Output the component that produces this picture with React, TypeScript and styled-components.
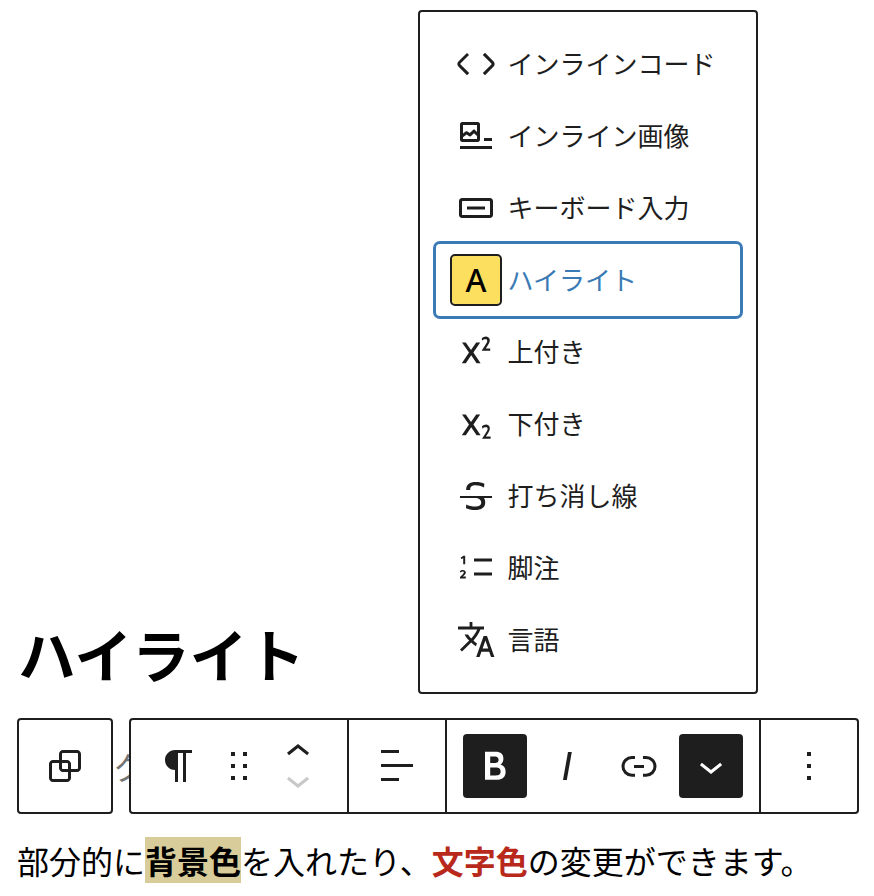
import React from "react";
import styled, { createGlobalStyle } from "styled-components";

const Global = createGlobalStyle`
  html, body { margin: 0; padding: 0; background: #fff; }
  body { font-family: "Noto Sans CJK JP", "Noto Sans", sans-serif; color: #000; }
`;

const Page = styled.div`
  position: relative;
  width: 874px;
  height: 896px;
  overflow: hidden;
  padding-top: 613px;
  box-sizing: border-box;
`;

const Menu = styled.div`
  position: absolute;
  left: 418px;
  top: 10px;
  width: 340px;
  box-sizing: border-box;
  padding: 16px;
  background: #fff;
  border: 2px solid #1e1e1e;
  border-radius: 4px;
  display: flex;
  flex-direction: column;
  z-index: 2;
`;

const Item = styled.div<{ $active?: boolean }>`
  height: 72px;
  display: flex;
  align-items: center;
  gap: 8px;
  padding-left: 16px;
  font-size: 26px;
  color: ${(p) => (p.$active ? "#3a7ab5" : "#1e1e1e")};
  border-radius: 4px;
  box-shadow: ${(p) => (p.$active ? "0 0 0 3px #3a7ab5" : "none")};
`;

const ItemLabel = styled.span`
  margin: 0 0 4px -0.5px;
`;

const Icon = styled.svg`
  width: 48px;
  height: 48px;
  flex: none;
  fill: currentColor;
  display: block;
`;

const MenuIcon = styled(Icon)`
  color: #1e1e1e;
`;

const Swatch = styled.span`
  width: 48px;
  height: 48px;
  flex: none;
  box-sizing: border-box;
  display: flex;
  align-items: center;
  justify-content: center;
  background: #fcdf5f;
  outline: 2px solid #1e1e1e;
  border-radius: 3px;
  color: #000;
  font-family: "Noto Sans", sans-serif;
  font-size: 32px;
  font-weight: 500;
  line-height: 1;
`;

const Heading = styled.h1`
  margin: 0 0 25px 18px;
  height: 80px;
  font-size: 57.6px;
  line-height: 80px;
  font-weight: 700;
`;

const ToolRow = styled.div`
  display: flex;
  margin-left: 17px;
  height: 96px;
`;

const Box = styled.div`
  display: flex;
  box-sizing: border-box;
  height: 96px;
  border: 2px solid #1e1e1e;
  border-radius: 4px;
  background: #fff;
  color: #1e1e1e;
`;

const Switcher = styled(Box)`
  width: 96px;
  align-items: center;
  justify-content: center;
`;

const Peek = styled.div`
  width: 16px;
  font-size: 32px;
  line-height: 96px;
  color: #757575;
  white-space: nowrap;
`;

const Toolbar = styled(Box)`
  position: relative;
  z-index: 1;
  width: 730px;
`;

const Group = styled.div<{ $w: number; $pad?: number; $gap?: number; $last?: boolean }>`
  width: ${(p) => p.$w}px;
  box-sizing: border-box;
  display: flex;
  align-items: center;
  justify-content: flex-start;
  gap: ${(p) => p.$gap ?? 0}px;
  padding-left: ${(p) => p.$pad ?? 0}px;
  border-right: ${(p) => (p.$last ? "none" : "2px solid #1e1e1e")};
`;

const Tool = styled.div<{ $w?: number; $on?: boolean }>`
  width: ${(p) => p.$w ?? 64}px;
  height: 64px;
  flex: none;
  display: flex;
  align-items: center;
  justify-content: center;
  border-radius: 4px;
  background: ${(p) => (p.$on ? "#1e1e1e" : "transparent")};
  color: ${(p) => (p.$on ? "#fff" : "#1e1e1e")};
`;

const Mover = styled.div`
  width: 48px;
  display: flex;
  flex-direction: column;
  align-items: center;
  gap: 12px;
`;

const MoverIcon = styled.svg<{ $dim?: boolean }>`
  width: 48px;
  height: 24px;
  display: block;
  fill: ${(p) => (p.$dim ? "#c8c8c8" : "#1e1e1e")};
`;

const Paragraph = styled.p`
  margin: 23px 0 0 17px;
  font-size: 32px;
  line-height: 46px;
  white-space: nowrap;
`;

const Marked = styled.strong`
  background: #d8cd9a;
  font-weight: 700;
`;

const Red = styled.strong`
  color: #b8291c;
  font-weight: 700;
`;

const P = ({ d }: { d: string }) => (
  <Icon viewBox="0 0 24 24">
    <path d={d} />
  </Icon>
);

const M = ({ d }: { d: string }) => (
  <MenuIcon viewBox="0 0 24 24">
    <path d={d} />
  </MenuIcon>
);

const paths = {
  code: "M20.8 10.7l-4.3-4.3-1.1 1.1 4.3 4.3c.1.1.1.3 0 .4l-4.3 4.3 1.1 1.1 4.3-4.3c.7-.8.7-1.9 0-2.6zM4.2 11.8l4.3-4.3-1-1-4.3 4.3c-.7.7-.7 1.8 0 2.5l4.3 4.3 1.1-1.1-4.3-4.3c-.2-.1-.2-.3-.1-.4z",
  image: "M4 18.5h16V17H4v1.5zM16 13v1.5h4V13h-4zM5.1 15h7.8c.6 0 1.1-.5 1.1-1.1V6.1c0-.6-.5-1.1-1.1-1.1H5.1C4.5 5 4 5.5 4 6.1v7.8c0 .6.5 1.1 1.1 1.1zm.4-8.5h7V10l-1-1c-.3-.3-.8-.3-1 0l-1.6 1.5-1.2-.7c-.3-.2-.6-.2-.9 0l-1.3 1V6.5zm0 6.1l1.8-1.3 1.3.8c.3.2.7.2.9-.1l1.5-1.4 1.5 1.4v1.5h-7v-.9z",
  kbd: "M5 7h14c.83 0 1.5.67 1.5 1.5v7c0 .83-.67 1.5-1.5 1.5H5c-.83 0-1.5-.67-1.5-1.5v-7C3.5 7.67 4.17 7 5 7zm.3 1.5c-.2 0-.3.1-.3.3v6.4c0 .2.1.3.3.3h13.4c.2 0 .3-.1.3-.3V8.8c0-.2-.1-.3-.3-.3H5.3zM7.5 11.25h9v1.5h-9z",
  sup: "M16.9 10.3l.8-1.3c.4-.6.7-1.2.9-1.6.2-.4.3-.8.3-1.2 0-.3-.1-.7-.2-1-.2-.2-.4-.4-.7-.6-.3-.2-.6-.3-1-.3s-.8.1-1.1.2c-.3.1-.7.3-1 .6l.1 1.3c.3-.3.5-.5.8-.6s.6-.2.9-.2c.3 0 .5.1.7.2.2.2.2.4.2.7 0 .3-.1.5-.2.8-.1.3-.4.7-.8 1.3l-1.8 2.8h4.3v-1.2h-2.2zM14.1 7.2h-2L9.5 11 6.9 7.2H5l3.5 5.1-3.6 5.3h2l2.7-4 2.7 4h2l-3.6-5.3 3.4-5.1z",
  sub: "M16.9 18.3l.8-1.2c.4-.6.7-1.2.9-1.6.2-.4.3-.8.3-1.2 0-.3-.1-.7-.2-1-.1-.3-.4-.5-.6-.7-.3-.2-.6-.3-1-.3s-.8.1-1.1.2c-.3.1-.7.3-1 .6l.2 1.3c.3-.3.5-.5.8-.6s.6-.2.9-.2c.3 0 .5.1.7.2.2.2.2.4.2.7 0 .3-.1.5-.2.8-.1.3-.4.7-.8 1.3L15 19.4h4.3v-1.2h-2.4zM14.1 7.2h-2L9.5 11 6.9 7.2H5l3.5 5.1-3.6 5.3h2l2.7-4 2.7 4h2l-3.6-5.3 3.4-5.1z",
  strike: "M9.1 9v-.5c0-.6.2-1.1.7-1.4.5-.3 1.2-.5 2-.5.7 0 1.4.1 2.1.3.7.2 1.4.5 2.1.9l.2-1.9c-.6-.3-1.2-.5-1.9-.7-.8-.1-1.6-.2-2.4-.2-1.5 0-2.7.3-3.6 1-.8.7-1.2 1.5-1.2 2.6V9h2zM20 12H4v1h8.3c.3.1.6.2.8.3.5.2.9.5 1.1.8.3.3.4.7.4 1.2 0 .7-.2 1.1-.8 1.5-.5.3-1.2.5-2.1.5-.8 0-1.6-.1-2.4-.3-.8-.2-1.5-.5-2.2-.8L7 18.1c.5.2 1.2.4 2 .6.8.2 1.6.3 2.4.3 1.7 0 3-.3 3.9-1 .9-.7 1.3-1.6 1.3-2.8 0-.9-.2-1.7-.7-2.2H20v-1z",
  note: "M11 7.2h9v1.5h-9zM11 14.2h9v1.5h-9zM4.3 6.9l1.4-1h.9v4.2h-1V7l-.8.6zM4 17.3v-.8l1.3-1.3c.4-.4.6-.6.6-.9 0-.3-.2-.5-.6-.5-.3 0-.6.2-.9.5l-.5-.6c.4-.5.9-.7 1.5-.7.9 0 1.5.5 1.5 1.2 0 .5-.2.8-.8 1.4l-.7.7h1.5v1z",
  lang: "M17.5 10h-1.7l-3.7 10.5h1.7l.9-2.6h3.9l.9 2.6h1.7L17.5 10zm-2.2 6.3 1.4-4 1.4 4h-2.8zm-4.8-3.8c1.6-1.8 2.9-3.6 3.7-5.7H16V5.2h-5.8V3H8.8v2.2H3v1.5h9.6c-.7 1.6-1.8 3.2-3 4.5-.6-.6-1.2-1.3-1.6-2H6.3c.6 1.1 1.3 2.2 2.3 3.1L4 16.7l1 1 4.6-4.5c.7.7 1.5 1.3 2.3 1.9l.6-1.4c-.6-.4-1.4-.9-2-1.7z",
  group: "M18 4h-7c-1.1 0-2 .9-2 2v3H6c-1.1 0-2 .9-2 2v7c0 1.1.9 2 2 2h7c1.1 0 2-.9 2-2v-3h3c1.1 0 2-.9 2-2V6c0-1.1-.9-2-2-2zm-4.5 14c0 .3-.2.5-.5.5H6c-.3 0-.5-.2-.5-.5v-7c0-.3.2-.5.5-.5h3V13c0 1.1.9 2 2 2h2.5v3zm0-4.5H11c-.3 0-.5-.2-.5-.5v-2.5H13c.3 0 .5.2.5.5v2.5zm5-.5c0 .3-.2.5-.5.5h-3V11c0-1.1-.9-2-2-2h-2.5V6c0-.3.2-.5.5-.5h7c.3 0 .5.2.5.5v7z",
  para: "m9.99609 14v-.2251l.00391.0001v6.225h1.5v-14.5h2.5v14.5h1.5v-14.5h3v-1.5h-8.50391c-2.76142 0-5 2.23858-5 5 0 2.7614 2.23858 5 5 5z",
  drag: "M8 7h2V5H8v2zm0 6h2v-2H8v2zm0 6h2v-2H8v2zm6-14v2h2V5h-2zm0 8h2v-2h-2v2zm0 6h2v-2h-2v2z",
  align: "M13 5.5H4V4h9v1.5Zm7 7H4V11h16v1.5Zm-7 7H4V18h9v1.5Z",
  bold: "M14.7 11.3c1-.6 1.5-1.6 1.5-3 0-2.3-1.3-3.4-4-3.4H7v14h5.8c1.4 0 2.5-.3 3.3-1 .8-.7 1.2-1.7 1.2-2.9.1-1.9-.8-3.1-2.6-3.7zm-5.1-4h2.3c.6 0 1.1.1 1.4.4.3.3.5.7.5 1.2s-.2 1-.5 1.2c-.3.3-.8.4-1.4.4H9.6V7.3zm4.6 9c-.4.3-1 .4-1.7.4H9.6v-3.9h2.9c.7 0 1.3.2 1.7.5.4.3.6.8.6 1.5s-.2 1.2-.6 1.5z",
  italic: "M12.5 5L10 19h1.9l2.5-14z",
  link: "M10 17.389H8.444A5.194 5.194 0 1 1 8.444 7H10v1.5H8.444a3.694 3.694 0 0 0 0 7.389H10v1.5ZM14 7h1.556a5.194 5.194 0 0 1 0 10.39H14v-1.5h1.556a3.694 3.694 0 0 0 0-7.39H14V7Zm-4.5 6h5v-1.5h-5V13Z",
  down: "M17.5 11.6L12 16l-5.5-4.4.9-1.2L12 14l4.6-3.6 1 1.2z",
  more: "M13 19h-2v-2h2v2zm0-6h-2v-2h2v2zm0-6h-2V5h2v2z",
};

export default function App() {
  return (
    <Page>
      <Global />
      <Menu>
        <Item><M d={paths.code} /><ItemLabel>インラインコード</ItemLabel></Item>
        <Item><M d={paths.image} /><ItemLabel>インライン画像</ItemLabel></Item>
        <Item><M d={paths.kbd} /><ItemLabel>キーボード入力</ItemLabel></Item>
        <Item $active><Swatch>A</Swatch><ItemLabel>ハイライト</ItemLabel></Item>
        <Item><M d={paths.sup} /><ItemLabel>上付き</ItemLabel></Item>
        <Item><M d={paths.sub} /><ItemLabel>下付き</ItemLabel></Item>
        <Item><M d={paths.strike} /><ItemLabel>打ち消し線</ItemLabel></Item>
        <Item><M d={paths.note} /><ItemLabel>脚注</ItemLabel></Item>
        <Item><M d={paths.lang} /><ItemLabel>言語</ItemLabel></Item>
      </Menu>
      <Heading>ハイライト</Heading>
      <ToolRow>
        <Switcher><P d={paths.group} /></Switcher>
        <Peek>ク</Peek>
        <Toolbar>
          <Group $w={218} $pad={16}>
            <Tool><P d={paths.para} /></Tool>
            <Tool $w={56}><P d={paths.drag} /></Tool>
            <Tool $w={61}>
              <Mover>
                <MoverIcon viewBox="0 0 24 12"><path d="M6.5 8.4L12 4l5.5 4.4-.9 1.2L12 6 7.5 9.6l-1-1.2z" /></MoverIcon>
                <MoverIcon viewBox="0 0 24 12" $dim><path d="M17.5 3.6L12 8 6.5 3.6l.9-1.2L12 6l4.6-3.6 1 1.2z" /></MoverIcon>
              </Mover>
            </Tool>
          </Group>
          <Group $w={98}>
            <Tool $w={96}><P d={paths.align} /></Tool>
          </Group>
          <Group $w={314} $pad={16} $gap={8}>
            <Tool $on><P d={paths.bold} /></Tool>
            <Tool><P d={paths.italic} /></Tool>
            <Tool><P d={paths.link} /></Tool>
            <Tool $on><P d={paths.down} /></Tool>
          </Group>
          <Group $w={96} $last>
            <Tool $w={96}><P d={paths.more} /></Tool>
          </Group>
        </Toolbar>
      </ToolRow>
      <Paragraph>
        部分的に<Marked>背景色</Marked>を入れたり、<Red>文字色</Red>の変更ができます。
      </Paragraph>
    </Page>
  );
}
